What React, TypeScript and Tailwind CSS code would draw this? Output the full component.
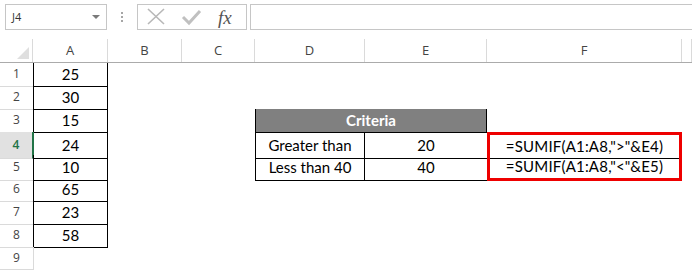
const cols = "grid grid-cols-[33px_75px_74px_73px_110px_122px_195px_1fr]"

const data = [25, 30, 15, 24, 10, 65, 23, 58]

function Toolbar() {
  return (
    <div className="flex h-[39px] items-start pt-[4px] font-['Open_Sans',sans-serif]">
      <div className="ml-[5px] flex h-[26px] w-[102px] items-center justify-between border border-[#c6c6c6] pl-[6px] pr-[6px]">
        <span className="text-[11px] text-[#333]">J4</span>
        <svg width="8" height="4" viewBox="0 0 8 4">
          <path d="M0 0 L8 0 L4 4 Z" fill="#7a7a7a" />
        </svg>
      </div>
      <div className="flex w-[30px] flex-col items-center gap-[2px] pt-[8px]">
        <span className="h-[2px] w-[2px] bg-[#a6a6a6]" />
        <span className="h-[2px] w-[2px] bg-[#a6a6a6]" />
        <span className="h-[2px] w-[2px] bg-[#a6a6a6]" />
      </div>
      <div className="flex h-[26px] w-[110px] items-center border border-[#c6c6c6]">
        <svg width="110" height="24" viewBox="0 0 110 24" className="shrink-0">
          <path d="M10 4 L26 19 M26 4 L10 19" stroke="#b8b8b8" strokeWidth="1.6" fill="none" />
          <path d="M45 12 L51 18 L62 6" stroke="#c0c0c0" strokeWidth="3" fill="none" />
        </svg>
        <span className="-ml-[30px] font-['Liberation_Serif',serif] text-[19px] italic leading-none text-[#555]">fx</span>
      </div>
      <div className="ml-[3px] h-[26px] flex-1 border border-r-0 border-[#c6c6c6]" />
    </div>
  )
}

function HeaderRow() {
  const letters = ["A", "B", "C", "D", "E", "F", ""]
  return (
    <div className={`${cols} h-[24px] border-b border-[#ababab] font-['Open_Sans',sans-serif] text-[13px] text-[#444]`}>
      <div className="relative border-r border-[#dadada]">
        <svg className="absolute bottom-[3px] right-[3px]" width="12" height="12" viewBox="0 0 12 12">
          <path d="M12 0 L12 12 L0 12 Z" fill="#dfdfdf" />
        </svg>
      </div>
      {letters.map((l, i) => (
        <div key={i} className="flex items-center justify-center border-r border-[#dadada]">
          {l}
        </div>
      ))}
    </div>
  )
}

function Row({ n }: { n: number }) {
  const val = data[n - 1]
  const active = n === 4
  const inA = n <= 8
  return (
    <div className={`${cols} h-[23px] font-['Lato',sans-serif] text-[15px] text-black`}>
      <div
        className={`flex items-center justify-center border-b border-[#dadada] font-['Open_Sans',sans-serif] text-[12px] ${
          active ? "border-r border-r-[#217346] bg-[#e1e1e1] font-semibold text-[#217346]" : "text-[#444]"
        }`}
      >
        {n}
      </div>
      <div
        className={`flex items-center justify-center ${
          inA ? "border-x border-b border-black" : "border-l border-[#dadada]"
        } ${active ? "border-l-[#217346]" : ""}`}
      >
        {val}
      </div>
      <div />
      <div />
      {n === 2 && (
        <>
          <div className="border-b border-black" />
          <div className="border-b border-black" />
          <div />
        </>
      )}
      {n === 3 && (
        <>
          <div className="col-span-2 flex items-center justify-center border-x border-b border-black bg-[#808080] font-bold text-white">
            Criteria
          </div>
          <div />
        </>
      )}
      {n === 4 && (
        <>
          <div className="flex items-center justify-center border-x border-b border-black">Greater than</div>
          <div className="flex items-center justify-center border-b border-black">20</div>
          <div className="flex items-center justify-center border-x-[3px] border-t-[3px] border-b border-x-[#ee0000] border-t-[#ee0000] border-b-black tracking-[0.2px]">
            =SUMIF(A1:A8,"&gt;"&amp;E4)
          </div>
        </>
      )}
      {n === 5 && (
        <>
          <div className="flex items-center justify-center border-x border-b border-black">Less than 40</div>
          <div className="flex items-center justify-center border-b border-black">40</div>
          <div className="flex items-center justify-center border-x-[3px] border-b-[3px] border-[#ee0000] tracking-[0.2px]">
            =SUMIF(A1:A8,"&lt;"&amp;E5)
          </div>
        </>
      )}
      {n !== 2 && n !== 3 && n !== 4 && n !== 5 && (
        <>
          <div />
          <div />
          <div />
        </>
      )}
      <div />
    </div>
  )
}

export default function App() {
  return (
    <div className="h-[270px] w-[692px] overflow-hidden bg-white">
      <Toolbar />
      <HeaderRow />
      {[1, 2, 3, 4, 5, 6, 7, 8, 9].map((n) => (
        <Row key={n} n={n} />
      ))}
    </div>
  )
}
